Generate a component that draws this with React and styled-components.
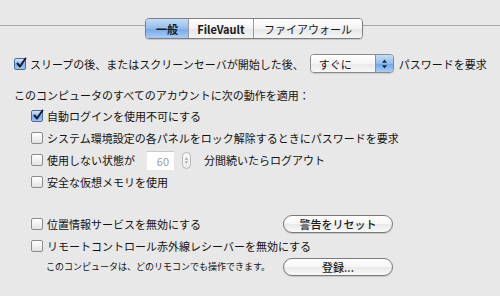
import React from 'react'
import styled, { createGlobalStyle } from 'styled-components'

const Global = createGlobalStyle`
  html, body {
    margin: 0;
    padding: 0;
    background: #e8e8e8;
  }
  body {
    font-family: "Noto Sans CJK JP", "Liberation Sans", sans-serif;
    font-size: 11px;
    color: #111;
  }
`

const Pane = styled.div`
  width: 500px;
  height: 296px;
  overflow: hidden;
  background: #e8e8e8;
`

const Header = styled.div`
  display: flex;
  align-items: center;
  padding-top: 19px;
  height: 19px;
`

const Rule = styled.div`
  flex: ${p => (p.$w ? `0 0 ${p.$w}px` : '1')};
  height: 1px;
  background: #a6a6a6;
  align-self: flex-start;
  margin-top: 6px;
`

const Tabs = styled.div`
  display: flex;
  height: 19px;
  border: 1px solid #7f7f7f;
  border-radius: 4px;
  overflow: hidden;
  box-shadow: 0 1px 1px rgba(0, 0, 0, 0.15);
`

const Tab = styled.div`
  display: flex;
  align-items: center;
  justify-content: center;
  width: ${p => p.$w}px;
  font-size: 11px;
  font-weight: ${p => (p.$bold ? 700 : 400)};
  color: #1a1a1a;
  border-left: ${p => (p.$first ? 'none' : '1px solid #9a9a9a')};
  background: ${p =>
    p.$active
      ? 'linear-gradient(#c4dcf7 0%, #92bdef 50%, #72a8ea 51%, #a6cdf7 100%)'
      : 'linear-gradient(#ffffff 0%, #f3f3f3 50%, #e6e6e6 51%, #f5f5f5 100%)'};
`

const Body = styled.div`
  padding-left: 14px;
`

const Row = styled.div`
  display: flex;
  align-items: center;
  height: ${p => p.$h || 22}px;
  margin-top: ${p => p.$mt || 0}px;
  padding-left: ${p => p.$indent || 0}px;
`

const Box = styled.span`
  flex: 0 0 auto;
  width: 12px;
  height: 12px;
  box-sizing: border-box;
  border: 1px solid ${p => (p.$on ? '#4a6c9b' : '#8c8c8c')};
  border-radius: 2px;
  margin-right: 4px;
  background: ${p =>
    p.$on
      ? 'linear-gradient(#d7e8fb, #7fb1ec 55%, #9cc6f3)'
      : 'linear-gradient(#ffffff, #f0f0f0 55%, #e2e2e2)'};
  display: flex;
  align-items: center;
  justify-content: center;
  position: relative;
`

const Check = () => (
  <svg width="12" height="12" viewBox="0 0 12 12" style={{ position: 'absolute', left: 0, top: -2 }}>
    <path d="M2.5 6.5 L5 9.5 L10.5 1.5" fill="none" stroke="#1b1b2e" strokeWidth="2" strokeLinecap="round" strokeLinejoin="round" />
  </svg>
)

const Label = styled.span`
  white-space: nowrap;
  font-size: ${p => p.$size || 11}px;
  width: ${p => (p.$w ? `${p.$w}px` : 'auto')};
  color: ${p => p.$color || '#111'};
`

const Heading = styled.div`
  height: 14px;
  margin-top: 15px;
  display: flex;
  align-items: center;
  white-space: nowrap;
`

const Popup = styled.div`
  display: flex;
  height: 19px;
  width: 84px;
  margin: 0 5px 0 6px;
  box-sizing: border-box;
  border: 1px solid #8a8a8a;
  border-radius: 4px;
  overflow: hidden;
  box-shadow: 0 1px 1px rgba(0, 0, 0, 0.12);
`

const PopupText = styled.div`
  flex: 1;
  display: flex;
  align-items: center;
  padding-left: 8px;
  background: linear-gradient(#ffffff, #f4f4f4 50%, #e9e9e9 51%, #f7f7f7);
`

const PopupArrows = styled.div`
  width: 17px;
  display: flex;
  align-items: center;
  justify-content: center;
  border-left: 1px solid #6f93c4;
  background: linear-gradient(#c4dcf7 0%, #92bdef 50%, #6ea5ea 51%, #a6cdf7 100%);
`

const Field = styled.div`
  width: 27px;
  height: 19px;
  box-sizing: border-box;
  background: #fff;
  border-top: 1px solid #c9c9c9;
  display: flex;
  align-items: center;
  justify-content: flex-end;
  padding-right: 5px;
  color: #9a9a9a;
  font-size: 11px;
  margin-left: 12px;
`

const Stepper = styled.div`
  width: 9px;
  height: 17px;
  box-sizing: border-box;
  border: 1px solid #b9b9b9;
  border-radius: 5px;
  background: linear-gradient(#fbfbfb, #ececec);
  margin: 0 13px 0 8px;
  display: flex;
  align-items: center;
  justify-content: center;
`

const Button = styled.div`
  width: 110px;
  height: 18px;
  box-sizing: border-box;
  border: 1px solid #7a7a7a;
  border-radius: 9px;
  background: linear-gradient(#ffffff, #f6f6f6 50%, #e8e8e8 51%, #fafafa);
  box-shadow: 0 1px 1px rgba(0, 0, 0, 0.15);
  display: flex;
  align-items: center;
  justify-content: center;
  font-size: 11px;
  font-weight: 500;
  color: #1a1a1a;
`

const Arrows = ({ color = '#1a2a44', w = 7, h = 10 }) => (
  <svg width={w} height={h} viewBox="0 0 7 10">
    <path d="M3.5 0.5 L6 3.8 H1 Z M3.5 9.5 L6 6.2 H1 Z" fill={color} />
  </svg>
)

export default function App() {
  return (
    <Pane>
      <Global />
      <Header>
        <Rule $w={145} />
        <Tabs>
          <Tab $w={42} $active $first $bold>一般</Tab>
          <Tab $w={64} $bold>FileVault</Tab>
          <Tab $w={108}>ファイアウォール</Tab>
        </Tabs>
        <Rule />
      </Header>
      <Body>
        <Row $h={19} $mt={16}>
          <Box $on><Check /></Box>
          <Label>スリープの後、またはスクリーンセーバが開始した後、</Label>
          <Popup>
            <PopupText>すぐに</PopupText>
            <PopupArrows><Arrows /></PopupArrows>
          </Popup>
          <Label>パスワードを要求</Label>
        </Row>
        <Heading>このコンピュータのすべてのアカウントに次の動作を適用：</Heading>
        <Row $mt={3} $indent={17}>
          <Box $on><Check /></Box>
          <Label>自動ログインを使用不可にする</Label>
        </Row>
        <Row $indent={17}>
          <Box />
          <Label>システム環境設定の各パネルをロック解除するときにパスワードを要求</Label>
        </Row>
        <Row $indent={17}>
          <Box />
          <Label>使用しない状態が</Label>
          <Field>60</Field>
          <Stepper><Arrows color="#a8a8a8" w={5} h={11} /></Stepper>
          <Label>分間続いたらログアウト</Label>
        </Row>
        <Row $indent={17}>
          <Box />
          <Label>安全な仮想メモリを使用</Label>
        </Row>
        <Row $mt={20} $indent={17}>
          <Box />
          <Label $w={236}>位置情報サービスを無効にする</Label>
          <Button>警告をリセット</Button>
        </Row>
        <Row $indent={17}>
          <Box />
          <Label>リモートコントロール赤外線レシーバーを無効にする</Label>
        </Row>
        <Row $h={19} $indent={32}>
          <Label $size={9} $w={237}>このコンピュータは、どのリモコンでも操作できます。</Label>
          <Button>登録...</Button>
        </Row>
      </Body>
    </Pane>
  )
}
